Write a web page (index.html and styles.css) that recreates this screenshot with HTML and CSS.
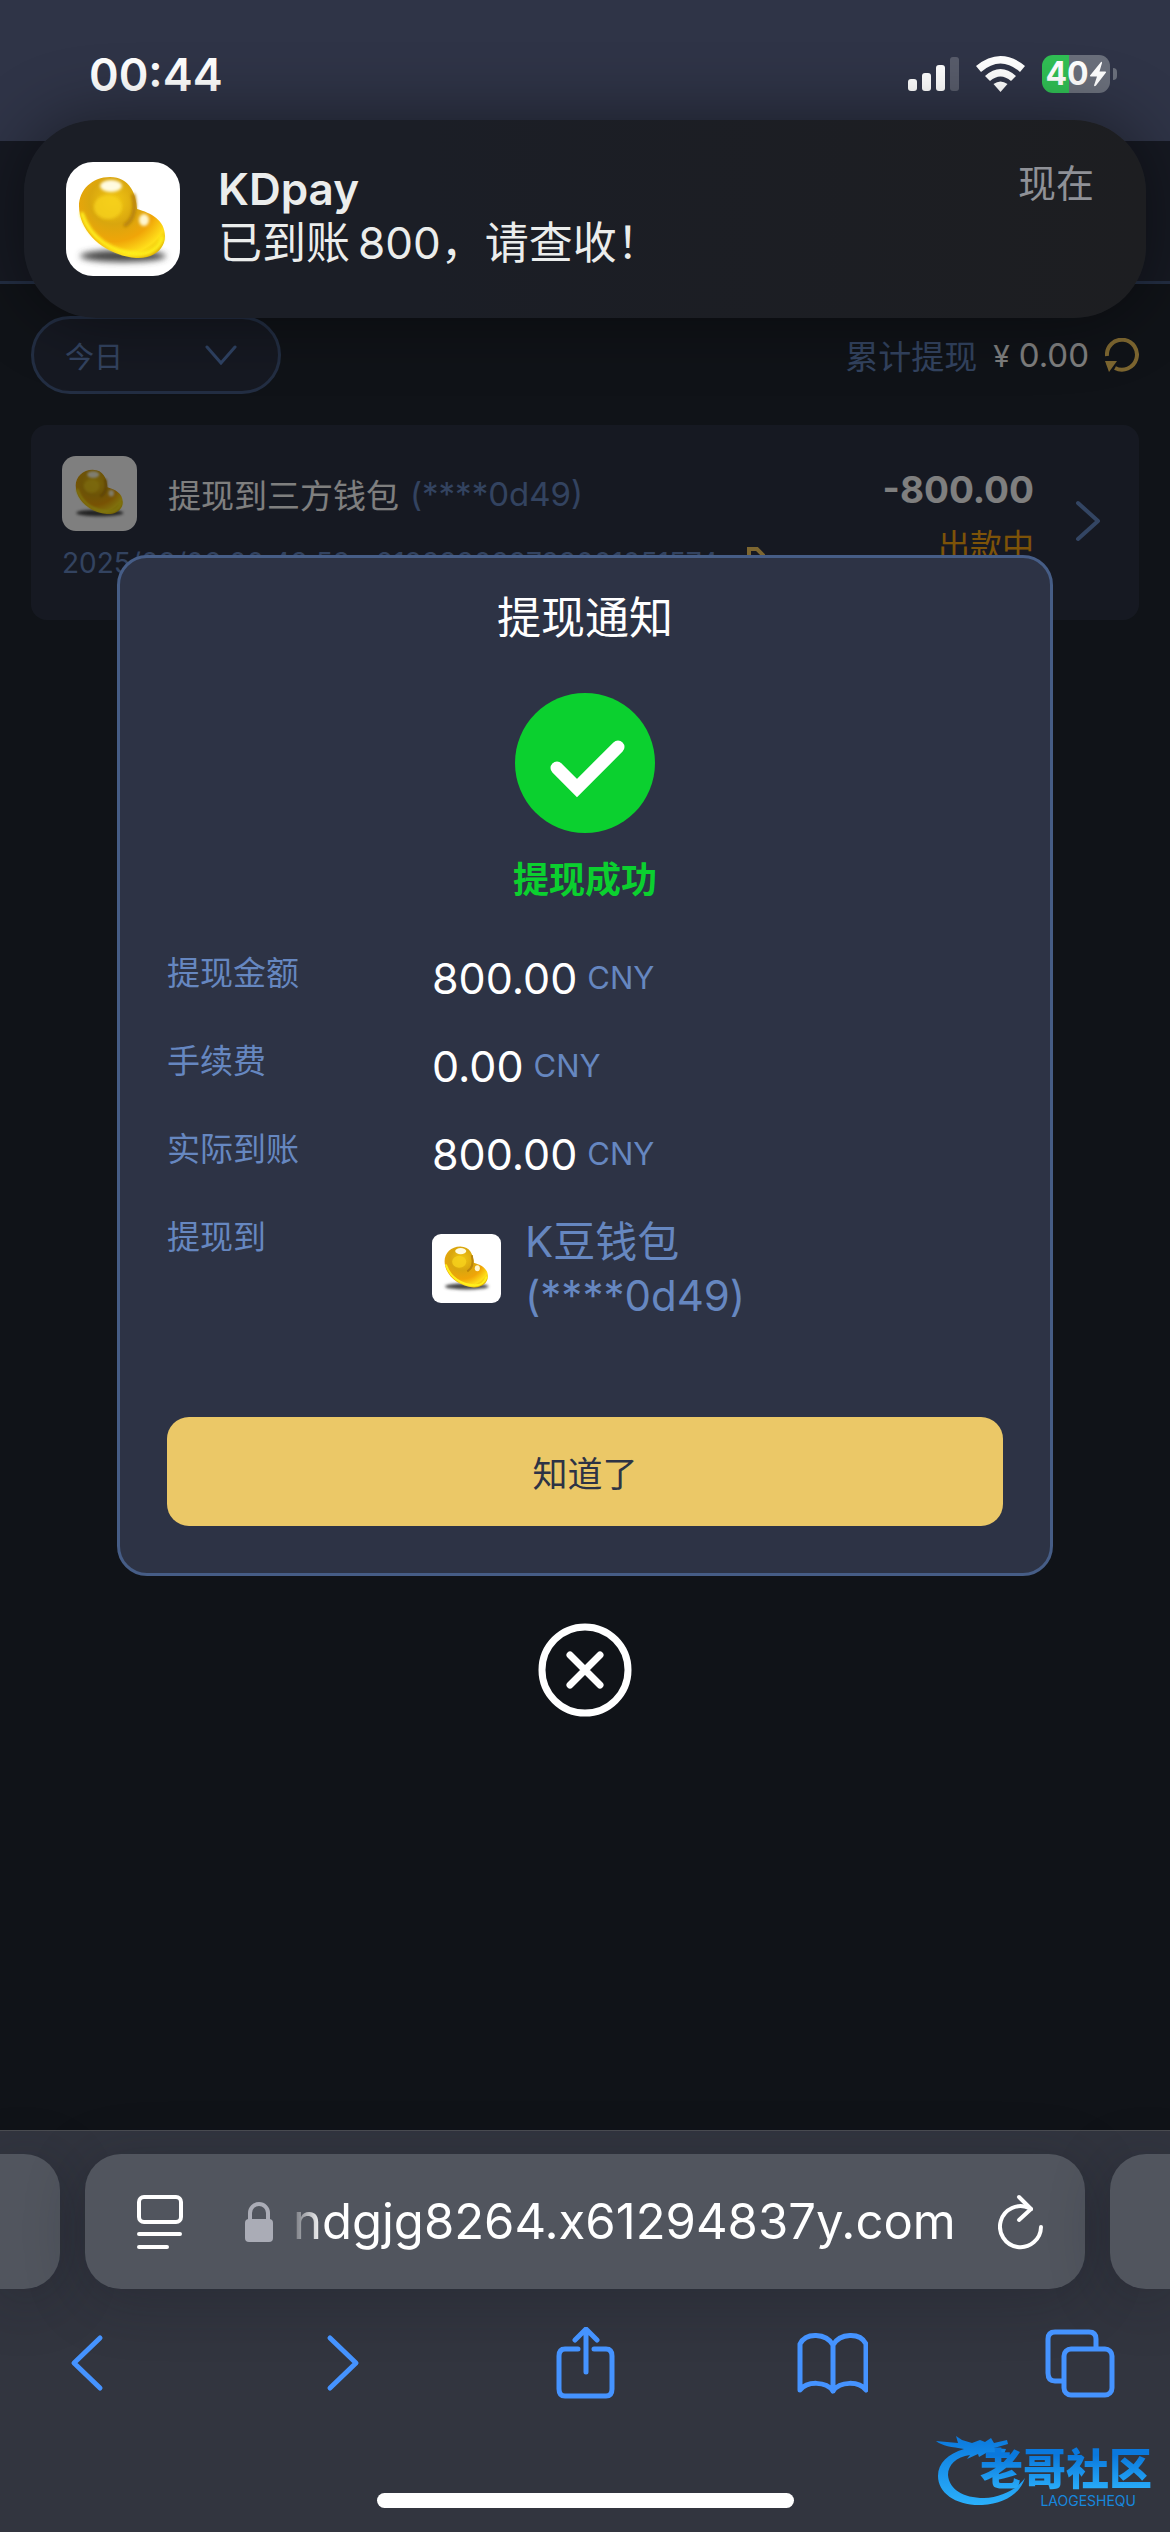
FILE: index.html
```
<!DOCTYPE html>
<html lang="zh-CN">

<head>
    <meta charset="UTF-8">
    <meta name="viewport" content="width=device-width, initial-scale=1.0">
    <title>提现记录</title>
    <link rel="stylesheet" href="styles.css">
</head>

<body>
    <svg class="defs" aria-hidden="true">
        <defs>
            <radialGradient id="gold" cx="0.4" cy="0.3" r="0.8">
                <stop offset="0" stop-color="#f2c814" />
                <stop offset="0.35" stop-color="#d9a60e" />
                <stop offset="0.62" stop-color="#f0a508" />
                <stop offset="0.85" stop-color="#ffdf1a" />
                <stop offset="1" stop-color="#e0b000" />
            </radialGradient>
            <linearGradient id="blue" x1="0" y1="0" x2="0" y2="1">
                <stop offset="0" stop-color="#0a78dd" />
                <stop offset="1" stop-color="#2bb0fb" />
            </linearGradient>
            <filter id="soft" x="-30%" y="-80%" width="160%" height="260%">
                <feGaussianBlur stdDeviation="3" />
            </filter>
            <filter id="shine" x="-50%" y="-50%" width="200%" height="200%">
                <feGaussianBlur stdDeviation="1.5" />
            </filter>
            <g id="bean">
                <ellipse cx="57" cy="94" rx="43" ry="6" fill="#444" filter="url(#soft)" />
                <path d="M44 15C64 15 70 32 71 47C85 51 99 58 99 74C99 88 86 97 70 96C38 93 13 70 13 44C13 28 26 15 44 15Z" fill="url(#gold)" />
                <path d="M16 52C24 76 46 91 72 92C84 92 93 86 96 76" fill="none" stroke="#fff01e" stroke-width="4" stroke-linecap="round" filter="url(#shine)" />
                <path d="M67 32C70 44 69 58 58 64" fill="none" stroke="#b98409" stroke-width="4" filter="url(#shine)" />
                <ellipse cx="42" cy="45" rx="14" ry="12" fill="#f7d21c" opacity="0.8" filter="url(#shine)" />
                <ellipse cx="45" cy="24" rx="11" ry="6" fill="#fffbe0" filter="url(#shine)" />
                <ellipse cx="78" cy="58" rx="5" ry="6" fill="#fff6cf" filter="url(#shine)" />
            </g>
        </defs>
    </svg>

    <!-- 状态栏 -->
    <div class="status">
        <span class="time">00:44</span>
        <div class="status-icons">
            <svg width="51" height="36" viewBox="0 0 51 36" fill="#fff">
                <rect x="0" y="23" width="9" height="12" rx="3" />
                <rect x="14" y="17" width="9" height="18" rx="3" />
                <rect x="28" y="9" width="9" height="26" rx="3" />
                <rect x="42" y="1" width="9" height="34" rx="3" opacity="0.2" />
            </svg>
            <svg width="49" height="36" viewBox="0 0 49 36" fill="#fff">
                <path d="M0 10Q24.5 -10 49 10L44 16Q24.5 -1 5 16Z" />
                <path d="M9 20Q24.5 6 40 20L35 25Q24.5 16 14 25Z" />
                <path d="M17.5 28Q24.5 23 31.5 28L24.5 36Z" />
            </svg>
            <div class="battery">
                <span class="battery-num">40</span>
                <svg width="18" height="26" viewBox="0 0 18 26" fill="#fff">
                    <path d="M12 1L1 14.5Q0.5 15.5 2 15.5H8L5 24.5Q5.5 26 7 24.5L17 11.5Q17.5 10.5 16 10.5H10.5L13 2Q13 0 12 1Z" />
                </svg>
                <i class="battery-cap"></i>
            </div>
        </div>
    </div>

    <!-- 通知横幅 -->
    <div class="notice">
        <svg class="notice-logo" viewBox="0 0 114 114"><use href="#bean" /></svg>
        <div class="notice-text">
            <p class="notice-title">KDpay</p>
            <p>已到账&thinsp;800，请查收！</p>
        </div>
        <span class="notice-time">现在</span>
    </div>

    <div class="page">
        <div class="header"></div>
        <div class="filter">
            <button class="day" type="button">
                今日
                <svg width="32" height="20" viewBox="0 0 32 20" fill="none" stroke="#5f86c8" stroke-width="3" stroke-linecap="round"><path d="M2 2L16 18L30 2" /></svg>
            </button>
            <div class="total">
                <span class="total-label">累计提现</span>
                <span class="total-num"><small>¥</small>0.00</span>
                <svg width="34" height="34" viewBox="0 0 34 34">
                    <path d="M2 18A15 15 0 1 1 10 30" fill="none" stroke="#fbcd60" stroke-width="4" />
                    <path d="M0 23H12L4 34Z" fill="#fbcd60" />
                </svg>
            </div>
        </div>
        <div class="card">
            <div class="card-left">
                <div class="card-name">
                    <svg class="card-logo" viewBox="-12 -10 137 137"><use href="#bean" /></svg>
                    <span>提现到三方钱包</span>
                    <span class="account">(****0d49)</span>
                </div>
                <div class="card-date">
                    <span>2025/09/06 00:43:53</span>
                    <span>219333033733001051574</span>
                    <svg width="22" height="26" viewBox="0 0 22 26" fill="none" stroke="#fbcd60" stroke-width="4"><path d="M5 18V4H13L19 10V24H2" /></svg>
                </div>
            </div>
            <div class="card-right">
                <strong>-800.00</strong>
                <span class="state">出款中</span>
            </div>
            <svg class="card-arrow" width="26" height="42" viewBox="0 0 26 42" fill="none" stroke="#668ac6" stroke-width="4" stroke-linecap="round" stroke-linejoin="round"><path d="M3 3L23 21L3 39" /></svg>
        </div>

        <!-- 弹窗 -->
        <div class="mask">
            <div class="dialog" role="dialog" aria-labelledby="dialog-title">
                <h1 id="dialog-title">提现通知</h1>
                <svg class="ok" width="140" height="140" viewBox="0 0 140 140">
                    <circle cx="70" cy="70" r="70" fill="#0bd02f" />
                    <path d="M42 75L62 95L103 54" fill="none" stroke="#fff" stroke-width="13" stroke-linecap="round" />
                </svg>
                <p class="ok-text">提现成功</p>
                <dl class="detail">
                    <dt>提现金额</dt>
                    <dd>800.00<small>CNY</small></dd>
                    <dt>手续费</dt>
                    <dd>0.00<small>CNY</small></dd>
                    <dt>实际到账</dt>
                    <dd>800.00<small>CNY</small></dd>
                    <dt>提现到</dt>
                    <dd class="wallet">
                        <svg class="wallet-logo" viewBox="-12 -10 137 137"><use href="#bean" /></svg>
                        <span>K豆钱包<br>(****0d49)</span>
                    </dd>
                </dl>
                <button class="confirm" type="button">知道了</button>
            </div>
            <button class="close" type="button" aria-label="关闭">
                <svg width="94" height="94" viewBox="0 0 94 94" fill="none" stroke="#fff" stroke-width="7" stroke-linecap="round">
                    <circle cx="47" cy="47" r="43" />
                    <path d="M32 32L62 62M62 32L32 62" />
                </svg>
            </button>
        </div>
    </div>

    <!-- 浏览器底栏 -->
    <div class="browser">
        <div class="tabs">
            <div class="tab-side tab-left"></div>
            <div class="address">
                <button type="button" aria-label="页面设置">
                    <svg width="46" height="54" viewBox="0 0 46 54" fill="none" stroke="#fff" stroke-width="4" stroke-linecap="round">
                        <rect x="2" y="2" width="42" height="25" rx="5" />
                        <path d="M2 39H43M2 52H30" />
                    </svg>
                </button>
                <svg class="lock" width="28" height="40" viewBox="0 0 28 40">
                    <rect x="0" y="17" width="28" height="23" rx="4" fill="#aaacb6" />
                    <path d="M5 18V11A9 9 0 0 1 23 11V18" fill="none" stroke="#aaacb6" stroke-width="4" />
                </svg>
                <input class="url" type="text" aria-label="网址" value="ndgjg8264.x61294837y.com">
                <button type="button" aria-label="刷新">
                    <svg width="46" height="56" viewBox="0 0 46 56" fill="none" stroke="#fff" stroke-width="4" stroke-linecap="round" stroke-linejoin="round">
                        <path d="M43 33A20.5 20.5 0 1 1 31 14L33 15" />
                        <path d="M21 3L33 15L21 26" />
                    </svg>
                </button>
            </div>
            <div class="tab-side tab-right"></div>
        </div>
        <div class="tools">
            <button type="button" aria-label="后退"><svg viewBox="0 0 72 72"><path d="M50 11L24 36L50 61" /></svg></button>
            <button type="button" aria-label="前进"><svg viewBox="0 0 72 72"><path d="M31 11L57 36L31 61" /></svg></button>
            <button type="button" aria-label="分享"><svg viewBox="0 0 72 72"><path d="M31 22H18Q12 22 12 29V62Q12 69 18 69H59Q65 69 65 62V29Q65 22 59 22H47M39 45V3M28 13L39 2L50 13" /></svg></button>
            <button type="button" aria-label="书签"><svg viewBox="0 0 72 72"><path d="M37 18C30 6 10 5 4 17V63C11 54 30 54 37 64C44 54 63 54 70 63V17C64 5 44 6 37 18V64" /></svg></button>
            <button type="button" aria-label="标签页"><svg viewBox="0 0 72 72"><rect x="20" y="22" width="48" height="46" rx="7" /><path d="M52 21V12Q52 5 45 5H11Q4 5 4 12V46Q4 54 11 54H19" /></svg></button>
        </div>
        <div class="home"></div>
        <div class="mark">
            <svg class="mark-dragon" width="90" height="76" viewBox="0 0 90 76" fill="url(#blue)">
                <path d="M28 17C12 22 2 31 2 44C2 61 20 74 46 73C68 72 84 62 89 46C80 58 65 65 48 66C27 66 13 57 12 43C12 33 20 25 34 23L31 27L42 22L43 25L50 21L57 24L68 22L70 17L58 16L72 12L71 8L58 11L55 6L49 10L44 8L36 11L26 8L20 4L22 11L0 9C6 14 16 15 28 17Z" />
            </svg>
            <div class="mark-text">
                <b>老哥社区</b>
                <span>LAOGESHEQU</span>
            </div>
        </div>
    </div>
</body>

</html>
```

FILE: styles.css
```
* {
    margin: 0;
    padding: 0;
    box-sizing: border-box;
}

body {
    position: relative;
    display: flex;
    flex-direction: column;
    min-height: 100vh;
    overflow-x: hidden;
    background: #202730;
    font-family: Inter, "Noto Sans CJK SC", sans-serif;
    color: #fff;
}

button {
    border: 0;
    background: none;
    font-family: inherit;
    cursor: pointer;
}

svg {
    display: block;
    flex: none;
}

.defs {
    position: absolute;
    width: 0;
    height: 0;
}

/* 状态栏 */
.status {
    display: flex;
    justify-content: space-between;
    height: 141px;
    padding: 46px 59px 0 89px;
    background: #2f3447;
}

.time {
    height: 56px;
    line-height: 58px;
    font-size: 45px;
    font-weight: 600;
}

.status-icons {
    display: flex;
    align-items: center;
    gap: 17px;
    height: 56px;
}

.battery {
    position: relative;
    display: flex;
    align-items: center;
    justify-content: center;
    width: 68px;
    height: 38px;
    margin-right: 1px;
    border-radius: 11px;
    background: linear-gradient(90deg, #30bf54 40%, #6a6f7b 40%);
}

.battery-num {
    font-size: 32px;
    font-weight: 700;
    line-height: 38px;
}

.battery-cap {
    position: absolute;
    right: -7px;
    top: 13px;
    width: 4px;
    height: 12px;
    border-radius: 0 4px 4px 0;
    background: #6a6f7b;
}

/* 通知横幅 */
.notice {
    position: absolute;
    z-index: 10;
    left: 24px;
    right: 24px;
    top: 120px;
    display: flex;
    align-items: center;
    gap: 38px;
    height: 198px;
    padding: 0 52px 0 42px;
    border-radius: 72px;
    background: linear-gradient(90deg, #1b1e26 35%, #1d1e21);
    box-shadow: 0 0 70px rgba(0, 0, 0, 0.45);
    color: #ebedec;
}

.notice-logo {
    width: 114px;
    height: 114px;
    border-radius: 27px;
    background: #fff;
}

.notice-text {
    flex: 1;
    padding-bottom: 6px;
    font-size: 44px;
    line-height: 54px;
}

.notice-title {
    font-weight: 600;
}

.notice-time {
    align-self: flex-start;
    margin-top: 36px;
    font-size: 38px;
    line-height: 54px;
    color: #8f9197;
}

/* 页面 */
.page {
    position: relative;
    flex: 1;
}

.header {
    height: 143px;
    border-bottom: 3px solid #465d86;
    background: #2d3345;
}

.filter {
    display: flex;
    align-items: center;
    justify-content: space-between;
    padding: 32px 31px 31px;
}

.day {
    display: flex;
    align-items: center;
    justify-content: space-between;
    width: 250px;
    height: 78px;
    padding: 0 41px 0 31px;
    border: 3px solid #465d86;
    border-radius: 39px;
    background: #2d3345;
    font-size: 29px;
    color: #6687c0;
}

.total {
    display: flex;
    align-items: center;
    gap: 16px;
    font-size: 33px;
}

.total-label {
    color: #6687c0;
}

.total-num small {
    margin-right: 9px;
    font-size: 30px;
}

.card {
    display: flex;
    height: 195px;
    margin: 0 31px;
    padding: 31px 38px 0 31px;
    border-radius: 16px;
    background: #2d3345;
}

.card-left {
    flex: 1;
}

.card-name {
    display: flex;
    align-items: center;
    font-size: 33px;
}

.card-logo {
    width: 75px;
    height: 75px;
    margin-right: 31px;
    border-radius: 14px;
    background: #fff;
}

.account {
    margin-left: 11px;
    color: #6687c0;
}

.card-date {
    display: flex;
    gap: 26px;
    margin-top: 14px;
    font-size: 28px;
    line-height: 36px;
    color: #6687c0;
}

.card-right {
    display: flex;
    flex-direction: column;
    text-align: right;
    font-size: 37px;
    line-height: 68px;
}

.card-right .state {
    font-size: 32px;
    line-height: 44px;
    color: #fba610;
}

.card-arrow {
    margin: 44px 0 0 41px;
}

.mask {
    position: absolute;
    inset: 0;
    display: flex;
    flex-direction: column;
    align-items: center;
    justify-content: center;
    background: rgba(0, 0, 0, 0.5);
}

/* 弹窗 */
.dialog {
    width: 80%;
    padding: 30px 47px 47px;
    border: 3px solid #465d86;
    border-radius: 30px;
    background: #2d3345;
    text-align: center;
}

.dialog h1 {
    font-size: 44px;
    font-weight: 400;
    line-height: 60px;
}

.ok {
    margin: 45px auto 22px;
}

.ok-text {
    font-size: 36px;
    font-weight: 700;
    line-height: 50px;
    color: #0bd02f;
}

.detail {
    display: grid;
    grid-template-columns: 265px 1fr;
    row-gap: 34px;
    margin: 46px 0 94px;
    text-align: left;
}

.detail dt {
    font-size: 33px;
    line-height: 44px;
    color: #6687c0;
}

.detail dd {
    display: flex;
    align-items: center;
    gap: 10px;
    font-size: 43px;
    line-height: 54px;
}

.detail small {
    font-size: 31px;
    color: #6687c0;
}

.detail .wallet {
    gap: 24px;
    font-size: 42px;
    color: #6687c0;
}

.wallet-logo {
    width: 69px;
    height: 69px;
    border-radius: 9px;
    background: #fff;
}

.confirm {
    display: block;
    width: 100%;
    height: 109px;
    border-radius: 22px;
    background: #ebc867;
    font-size: 35px;
    color: #2d3345;
}

.close {
    margin-top: 47px;
}

/* 浏览器底栏 */
.browser {
    position: relative;
    height: 402px;
    padding-top: 23px;
    border-top: 1px solid #4b4d52;
    background: #32353f;
}

.tabs {
    display: flex;
    gap: 25px;
    height: 135px;
}

.tab-side,
.address {
    background: #51555e;
    box-shadow: 0 10px 60px rgba(20, 24, 32, 0.3);
}

.tab-side {
    width: 60px;
}

.tab-left {
    border-radius: 0 36px 36px 0;
}

.tab-right {
    border-radius: 36px 0 0 36px;
}

.address {
    flex: 1;
    display: flex;
    align-items: center;
    min-width: 0;
    padding: 0 41px 0 52px;
    border-radius: 36px;
}

.lock {
    margin: 0 20px 0 62px;
}

.url {
    flex: 1;
    min-width: 0;
    margin-right: 32px;
    border: 0;
    outline: 0;
    background: none;
    font-family: inherit;
    font-size: 49px;
    color: #fff;
    -webkit-mask-image: linear-gradient(90deg, rgba(0, 0, 0, 0.2), #000 30px);
    mask-image: linear-gradient(90deg, rgba(0, 0, 0, 0.2), #000 30px);
}

.tools {
    display: flex;
    justify-content: space-between;
    padding: 38px 54px 0 50px;
}

.tools svg {
    width: 72px;
    height: 72px;
    fill: none;
    stroke: #4593ff;
    stroke-width: 5px;
    stroke-linecap: round;
    stroke-linejoin: round;
}

.home {
    position: absolute;
    left: 50%;
    bottom: 24px;
    width: 417px;
    height: 15px;
    margin-left: -208px;
    border-radius: 8px;
    background: #fff;
}

.mark {
    position: absolute;
    right: 18px;
    bottom: 22px;
    display: flex;
}

.mark-dragon {
    margin-right: -46px;
}

.mark-text {
    display: flex;
    flex-direction: column;
    align-items: center;
    padding-top: 14px;
}

.mark-text b {
    font-size: 43px;
    font-weight: 900;
    line-height: 46px;
    background: linear-gradient(#0a78dd 20%, #2bb0fb);
    -webkit-background-clip: text;
    background-clip: text;
    color: transparent;
}

.mark-text span {
    align-self: flex-end;
    margin-right: 16px;
    font-size: 14px;
    line-height: 18px;
    color: #1787dd;
}
```
